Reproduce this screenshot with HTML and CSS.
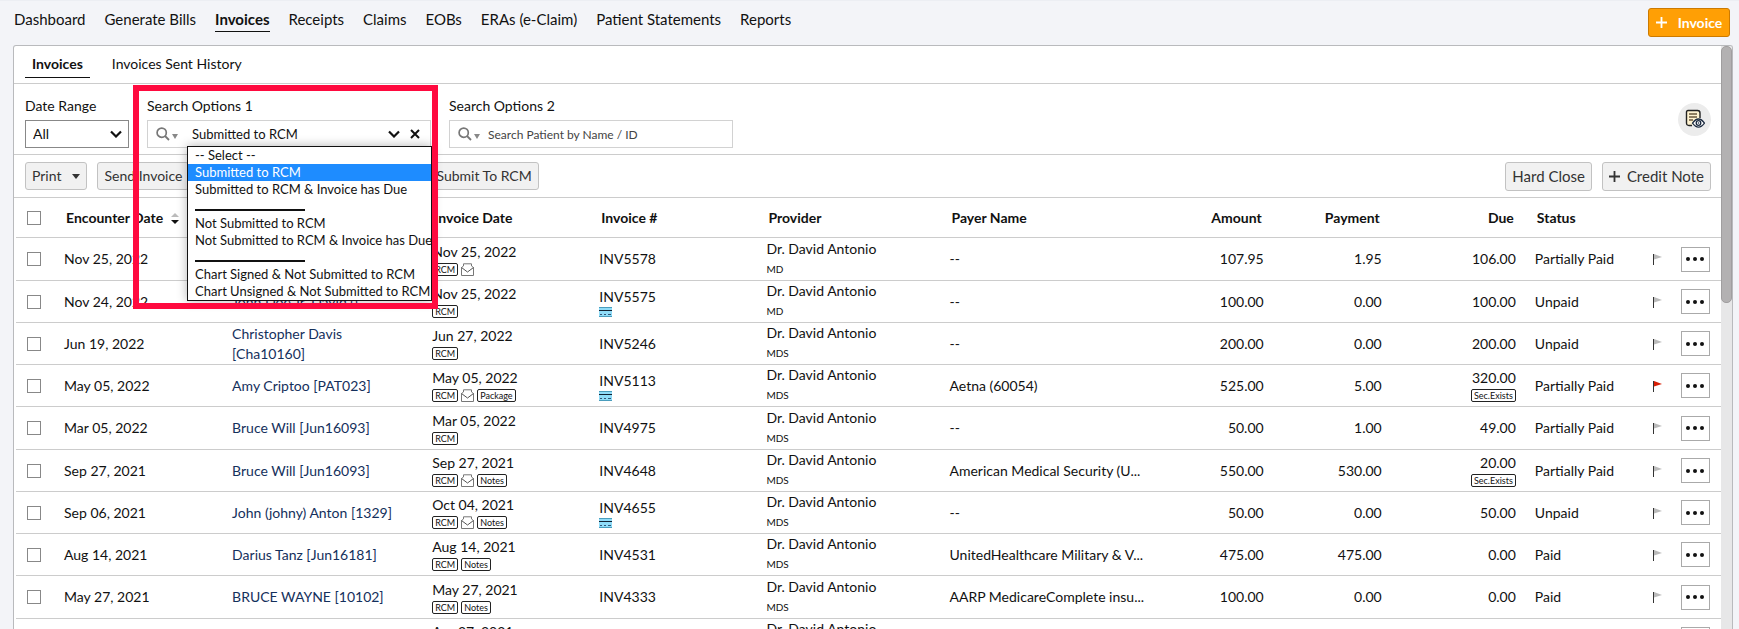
FILE: index.html
```html
<!DOCTYPE html>
<html lang="en">
<head>
<meta charset="utf-8">
<title>Invoices</title>
<link rel="stylesheet" href="styles.css">
</head>
<body>
<svg class="defs" aria-hidden="true">
  <symbol id="search" viewBox="0 0 14 14"><circle cx="5.7" cy="5.7" r="4.6" fill="none" stroke="#777" stroke-width="1.7"/><path d="M9 9l4 4" stroke="#777" stroke-width="1.8"/></symbol>
  <symbol id="mail" viewBox="0 0 13 13"><path d="M.5 4.500V12.500h12V4.500L10.500 3V.8h-8V3z" fill="#fff" stroke="#777"/><path d="M.5 4.500L6.500 9l6-4.500" fill="none" stroke="#555"/></symbol>
  <symbol id="card" viewBox="0 0 13 10"><path d="M0 0h13v10H0z" fill="#8fdcf8"/><path d="M0 0h13v1H0zM0 9h13v1H0z" fill="#4a9dbd"/><path d="M0 3h13v1H0z" fill="#123"/><path d="M1 7.500h2M5 7.500h2M9 7.500h3" stroke="#357" stroke-width="1"/></symbol>
  <symbol id="flag" viewBox="0 0 10 12"><path d="M.5 1v11" stroke="#333"/><path d="M1 1l8 3-8 2.500z" fill="currentColor"/></symbol>
  <symbol id="plus" viewBox="0 0 12 12"><path d="M6 0v12M0 6h12" stroke="currentColor" stroke-width="2"/></symbol>
</svg>
<header class="topbar">
  <nav class="nav">
    <a href="#">Dashboard</a><a href="#">Generate Bills</a><a href="#" class="active">Invoices</a><a href="#">Receipts</a><a href="#">Claims</a><a href="#">EOBs</a><a href="#">ERAs (e-Claim)</a><a href="#">Patient Statements</a><a href="#">Reports</a>
  </nav>
  <button class="new-invoice"><svg class="i-plus"><use href="#plus"/></svg>Invoice</button>
</header>
<main class="panel">
  <div class="content">
    <nav class="tabs"><a href="#" class="active">Invoices</a><a href="#">Invoices Sent History</a></nav>
    <form class="filters">
      <div class="field range">
        <label for="range">Date Range</label>
        <div class="box dark"><select id="range"><option>All</option></select><svg class="i-chev" viewBox="0 0 12 8"><path d="M1 1.500l5 5 5-5" fill="none" stroke="#111" stroke-width="2.200"/></svg></div>
      </div>
      <div class="field status">
        <label for="status">Search Options 1</label>
        <div class="box">
          <svg class="i-search"><use href="#search"/></svg><span class="caret grey"></span>
          <select id="status"><option>Submitted to RCM</option></select>
          <svg class="i-chev" viewBox="0 0 12 8"><path d="M1 1.500l5 5 5-5" fill="none" stroke="#111" stroke-width="2.200"/></svg>
          <button type="button" class="clear" aria-label="Clear"><svg viewBox="0 0 10 10"><path d="M1 1l8 8M9 1L1 9" stroke="#111" stroke-width="2"/></svg></button>
        </div>
        <ul class="menu" role="listbox">
          <li>-- Select --</li>
          <li class="selected">Submitted to RCM</li>
          <li>Submitted to RCM &amp; Invoice has Due</li>
          <li class="rule"></li>
          <li>Not Submitted to RCM</li>
          <li>Not Submitted to RCM &amp; Invoice has Due</li>
          <li class="rule"></li>
          <li>Chart Signed &amp; Not Submitted to RCM</li>
          <li>Chart Unsigned &amp; Not Submitted to RCM</li>
        </ul>
        <div class="callout"></div>
      </div>
      <div class="field patient">
        <label for="patient">Search Options 2</label>
        <div class="box"><svg class="i-search"><use href="#search"/></svg><span class="caret grey"></span><input id="patient" type="text" placeholder="Search Patient by Name / ID"></div>
      </div>
      <button type="button" class="view" aria-label="View summary"><svg viewBox="0 0 20 20"><path d="M7 16.500H4Q1.500 16.500 1.500 14V3Q1.500 1.500 3 1.500H12.500Q15 1.500 15 4V9" fill="#fff3d0" stroke="#222" stroke-width="1.400"/><path d="M4 5h8M4 8h8M4 11h4" stroke="#6b5a3c" stroke-width="1.400"/><path d="M7.500 14.200q6-8.400 12 0q-6 8-12 0z" fill="#fff" stroke="#1c2b40" stroke-width="1.300"/><circle cx="13.500" cy="14" r="2.300" fill="#fff" stroke="#1c2b40" stroke-width="1.300"/><circle cx="13.500" cy="14" r=".8" fill="#1c2b40"/></svg></button>
    </form>
    <div class="toolbar">
      <button>Print<span class="caret"></span></button>
      <button>Send Invoice</button>
      <button class="submit">Submit To RCM</button>
      <button class="large close">Hard Close</button>
      <button class="large"><svg class="i-plus"><use href="#plus"/></svg>Credit Note</button>
    </div>
    <table>
      <colgroup><col class="c-check"><col class="c-date"><col class="c-patient"><col class="c-inv"><col class="c-inv"><col class="c-prov"><col class="c-payer"><col class="c-amount"><col class="c-payment"><col class="c-due"><col class="c-status"><col class="c-flag"><col class="c-more"></colgroup>
      <thead>
        <tr><th><input type="checkbox" aria-label="Select all"></th><th>Encounter Date<span class="sort"><i></i><b></b></span></th><th></th><th>Invoice Date</th><th>Invoice #</th><th>Provider</th><th>Payer Name</th><th class="num">Amount</th><th class="num">Payment</th><th class="num due">Due</th><th>Status</th><th></th><th></th></tr>
      </thead>
      <tbody>
        <tr><td><input type="checkbox" aria-label="Select INV5578"></td><td>Nov 25, 2022</td><td></td><td>Nov 25, 2022<div class="tags"><span class="tag">RCM</span><svg class="i-mail"><use href="#mail"/></svg></div></td><td>INV5578</td><td>Dr. David Antonio<small>MD</small></td><td>--</td><td class="num">107.95</td><td class="num">1.95</td><td class="num due">106.00</td><td>Partially Paid</td><td><svg class="i-flag"><use href="#flag"/></svg></td><td><button class="more" aria-label="More"><i></i><i></i><i></i></button></td></tr>
        <tr><td><input type="checkbox" aria-label="Select INV5575"></td><td>Nov 24, 2022</td><td><a href="#">John Doe Jr, David ()</a></td><td>Nov 25, 2022<div class="tags"><span class="tag">RCM</span></div></td><td>INV5575<svg class="i-card"><use href="#card"/></svg></td><td>Dr. David Antonio<small>MD</small></td><td>--</td><td class="num">100.00</td><td class="num">0.00</td><td class="num due">100.00</td><td>Unpaid</td><td><svg class="i-flag"><use href="#flag"/></svg></td><td><button class="more" aria-label="More"><i></i><i></i><i></i></button></td></tr>
        <tr><td><input type="checkbox" aria-label="Select INV5246"></td><td>Jun 19, 2022</td><td><a href="#">Christopher Davis<br>[Cha10160]</a></td><td>Jun 27, 2022<div class="tags"><span class="tag">RCM</span></div></td><td>INV5246</td><td>Dr. David Antonio<small>MDS</small></td><td>--</td><td class="num">200.00</td><td class="num">0.00</td><td class="num due">200.00</td><td>Unpaid</td><td><svg class="i-flag"><use href="#flag"/></svg></td><td><button class="more" aria-label="More"><i></i><i></i><i></i></button></td></tr>
        <tr><td><input type="checkbox" aria-label="Select INV5113"></td><td>May 05, 2022</td><td><a href="#">Amy Criptoo [PAT023]</a></td><td>May 05, 2022<div class="tags"><span class="tag">RCM</span><svg class="i-mail"><use href="#mail"/></svg><span class="tag">Package</span></div></td><td>INV5113<svg class="i-card"><use href="#card"/></svg></td><td>Dr. David Antonio<small>MDS</small></td><td>Aetna (60054)</td><td class="num">525.00</td><td class="num">5.00</td><td class="num due">320.00<div class="tags end"><span class="tag">Sec.Exists</span></div></td><td>Partially Paid</td><td><svg class="i-flag red"><use href="#flag"/></svg></td><td><button class="more" aria-label="More"><i></i><i></i><i></i></button></td></tr>
        <tr><td><input type="checkbox" aria-label="Select INV4975"></td><td>Mar 05, 2022</td><td><a href="#">Bruce Will [Jun16093]</a></td><td>Mar 05, 2022<div class="tags"><span class="tag">RCM</span></div></td><td>INV4975</td><td>Dr. David Antonio<small>MDS</small></td><td>--</td><td class="num">50.00</td><td class="num">1.00</td><td class="num due">49.00</td><td>Partially Paid</td><td><svg class="i-flag"><use href="#flag"/></svg></td><td><button class="more" aria-label="More"><i></i><i></i><i></i></button></td></tr>
        <tr><td><input type="checkbox" aria-label="Select INV4648"></td><td>Sep 27, 2021</td><td><a href="#">Bruce Will [Jun16093]</a></td><td>Sep 27, 2021<div class="tags"><span class="tag">RCM</span><svg class="i-mail"><use href="#mail"/></svg><span class="tag">Notes</span></div></td><td>INV4648</td><td>Dr. David Antonio<small>MDS</small></td><td>American Medical Security (U...</td><td class="num">550.00</td><td class="num">530.00</td><td class="num due">20.00<div class="tags end"><span class="tag">Sec.Exists</span></div></td><td>Partially Paid</td><td><svg class="i-flag"><use href="#flag"/></svg></td><td><button class="more" aria-label="More"><i></i><i></i><i></i></button></td></tr>
        <tr><td><input type="checkbox" aria-label="Select INV4655"></td><td>Sep 06, 2021</td><td><a href="#">John (johny) Anton [1329]</a></td><td>Oct 04, 2021<div class="tags"><span class="tag">RCM</span><svg class="i-mail"><use href="#mail"/></svg><span class="tag">Notes</span></div></td><td>INV4655<svg class="i-card"><use href="#card"/></svg></td><td>Dr. David Antonio<small>MDS</small></td><td>--</td><td class="num">50.00</td><td class="num">0.00</td><td class="num due">50.00</td><td>Unpaid</td><td><svg class="i-flag"><use href="#flag"/></svg></td><td><button class="more" aria-label="More"><i></i><i></i><i></i></button></td></tr>
        <tr><td><input type="checkbox" aria-label="Select INV4531"></td><td>Aug 14, 2021</td><td><a href="#">Darius Tanz [Jun16181]</a></td><td>Aug 14, 2021<div class="tags"><span class="tag">RCM</span><span class="tag">Notes</span></div></td><td>INV4531</td><td>Dr. David Antonio<small>MDS</small></td><td>UnitedHealthcare Military &amp; V...</td><td class="num">475.00</td><td class="num">475.00</td><td class="num due">0.00</td><td>Paid</td><td><svg class="i-flag"><use href="#flag"/></svg></td><td><button class="more" aria-label="More"><i></i><i></i><i></i></button></td></tr>
        <tr><td><input type="checkbox" aria-label="Select INV4333"></td><td>May 27, 2021</td><td><a href="#">BRUCE WAYNE [10102]</a></td><td>May 27, 2021<div class="tags"><span class="tag">RCM</span><span class="tag">Notes</span></div></td><td>INV4333</td><td>Dr. David Antonio<small>MDS</small></td><td>AARP MedicareComplete insu...</td><td class="num">100.00</td><td class="num">0.00</td><td class="num due">0.00</td><td>Paid</td><td><svg class="i-flag"><use href="#flag"/></svg></td><td><button class="more" aria-label="More"><i></i><i></i><i></i></button></td></tr>
        <tr><td></td><td></td><td></td><td>Apr 27, 2021<div class="tags"><span class="tag">RCM</span></div></td><td></td><td>Dr. David Antonio<small>MDS</small></td><td></td><td></td><td></td><td></td><td></td><td></td><td><button class="more" aria-label="More"><i></i><i></i><i></i></button></td></tr>
      </tbody>
    </table>
  </div>
  <div class="scrollbar"><div class="thumb"></div></div>
</main>
</body>
</html>
```
FILE: styles.css
```css
* { box-sizing: border-box; }
body {
  margin: 0;
  height: 100vh;
  display: flex;
  flex-direction: column;
  overflow: hidden;
  background: #f3f4f8;
  color: #111;
  font: 14px/20px Lato, "Liberation Sans", sans-serif;
}
.defs { position: absolute; width: 0; height: 0; }
a { color: inherit; text-decoration: none; }
button, select, input { font: inherit; color: inherit; }
button { display: inline-flex; align-items: center; justify-content: center; cursor: pointer; }
svg { display: block; flex: none; }

/* Top navigation */
.topbar { display: flex; justify-content: space-between; height: 45px; padding: 7px 9px 0 14px; border-top: 1px solid #eceef3; }
.nav { display: flex; gap: 19px; font-size: 15px; line-height: 22px; }
.nav a { height: 24px; }
.active { font-weight: 700; border-bottom: 1px solid #111; }
.new-invoice { height: 29px; width: 82px; padding: 0; gap: 11px; color: #fff; font-weight: 700; background: #ff9f05; border: 1px solid #cc7a00; border-radius: 3px; }
.new-invoice .i-plus { width: 11px; height: 11px; }

/* Panel */
.panel { flex: 1; min-height: 0; display: flex; margin: 0 6px 0 13px; background: #fff; border: 1px solid #b9babd; border-bottom: 0; border-radius: 3px 3px 0 0; overflow: hidden; }
.content { flex: 1; min-width: 0; }
.scrollbar { width: 11px; background: #e7e7e8; }
.thumb { height: 44%; background: #b3b1b2; border: 1px solid #a09e9f; border-radius: 5px; }

.tabs { display: flex; gap: 15px; height: 38px; padding: 5px 11px 0; border-bottom: 1px solid #ccc; }
.tabs a { height: 27px; padding: 3px 7px; }

/* Filters */
.filters { display: flex; align-items: center; gap: 18px; height: 71px; padding: 0 10px 0 11px; border-bottom: 1px solid #ccc; }
.field { position: relative; display: flex; flex-direction: column; gap: 4px; padding-top: 6px; }
.box { display: flex; align-items: center; height: 28px; padding: 0 8px; border: 1px solid #d2d2d2; background: #fff; }
.box.dark { border-color: #888; padding: 0 6px 0 7px; }
.box select, .box input { flex: 1; min-width: 0; height: 100%; padding: 0; border: 0; outline: 0; background: none; appearance: none; }
.box input { margin-left: 8px; font-size: 12px; }
.box input::placeholder { color: #444; opacity: 1; }
.box #status { margin-left: 14px; font-size: 13px; }
.range { width: 104px; }
.status { width: 284px; z-index: 2; }
.patient { width: 284px; }
.i-search { width: 14px; height: 14px; }
.i-chev { width: 12px; height: 8px; }
.caret { width: 0; height: 0; border: 4px solid transparent; border-top: 5px solid #333; border-bottom: 0; }
.caret.grey { border-width: 3px; border-top: 5px solid #888; border-bottom: 0; margin: 5px 0 0 2px; }
.clear { margin: 0 2px 0 10px; padding: 0; border: 0; background: none; }
.clear svg { width: 10px; height: 10px; }
.menu { position: absolute; left: 40px; top: 56px; width: 245px; margin: 0; padding: 0; list-style: none; background: #fff; border: 1px solid #111; box-shadow: 0 0 10px rgba(0, 0, 0, .3); font-size: 13px; line-height: 17px; }
.menu li { height: 17px; padding-left: 7px; white-space: nowrap; }
.menu .selected { background: #1e8cff; color: #fff; }
.menu .rule::before { content: ""; display: inline-block; width: 110px; height: 2px; background: #111; }
.callout { position: absolute; left: -14px; top: -5px; width: 305px; height: 224px; border: 6px solid #ff0a3f; pointer-events: none; }
.view { width: 33px; height: 33px; margin-left: auto; padding: 0; border: 0; border-radius: 50%; background: #ececec; }
.view svg { width: 20px; height: 20px; }

/* Toolbar */
.toolbar { display: flex; align-items: center; gap: 10px; height: 43px; padding: 0 10px 0 11px; border-bottom: 1px solid #ccc; }
.toolbar button { height: 28px; padding: 0 6px; gap: 11px; color: #333; background: #f1f1f1; border: 1px solid #c2c2c2; border-radius: 3px; white-space: nowrap; }
.toolbar .submit { margin-left: 230px; }
.toolbar .close { margin-left: auto; }
.toolbar .large { height: 29px; gap: 7px; font-size: 15px; }
.toolbar .i-plus { width: 11px; height: 11px; }

/* Invoice table */
table { width: calc(100% - 2px); margin-left: 2px; table-layout: fixed; border-collapse: separate; border-spacing: 0; }
.c-check { width: 42px; } .c-date { width: 168px; } .c-patient { width: 200px; } .c-inv { width: 167px; } .c-prov { width: 183px; } .c-payer { width: 206px; }
.c-amount { width: 120px; } .c-payment { width: 118px; } .c-due { width: 141px; } .c-status { width: 118px; } .c-flag { width: 28px; } .c-more { width: 46px; }
th, td { padding: 0 6px; text-align: left; vertical-align: middle; border-bottom: 1px solid #ccc; white-space: nowrap; }
th { height: 40px; padding: 0 8px; }
td { height: 42px; line-height: 20px; }
tbody tr:nth-child(4n+1) td { height: 43px; }
td:first-child, th:first-child { padding-left: 11px; }
.num { text-align: right; }
td.due { padding-right: 13px; }
th.due { padding-right: 15px; }
td a { color: #14305c; }
input[type="checkbox"] { display: block; width: 14px; height: 14px; margin: 0; appearance: none; background: #fff; border: 1px solid #888; }
.sort { display: inline-flex; flex-direction: column; gap: 3px; margin-left: 8px; vertical-align: middle; }
.sort i, .sort b { border: 4px solid transparent; }
.sort i { border-top: 0; border-bottom: 4px solid #bbb; }
.sort b { border-bottom: 0; border-top: 4px solid #111; }
small { display: block; font-size: 10px; line-height: 21px; }
.tags { display: flex; align-items: center; gap: 3px; height: 15px; }
.tags.end { justify-content: flex-end; }
.tag { height: 13px; padding: 0 2px; font-size: 9px; line-height: 11px; border: 1px solid #222; border-radius: 2px; }
.i-mail { width: 13px; height: 13px; }
.i-card { width: 13px; height: 10px; }
.i-flag { width: 10px; height: 12px; color: #bbb; }
.i-flag.red { color: #d81e05; }
.more { width: 29px; height: 25px; padding: 0; gap: 3px; background: #fff; border: 1px solid #aaa; }
.more i { width: 4px; height: 4px; border-radius: 50%; background: #111; }
```
